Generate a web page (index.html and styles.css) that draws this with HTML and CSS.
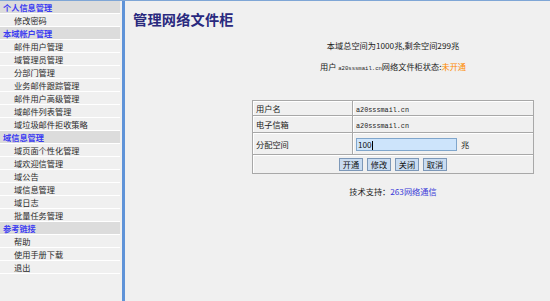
FILE: index.html
```html
<!DOCTYPE html>
<html lang="zh-CN">
<head>
<meta charset="utf-8">
<title>管理网络文件柜</title>
<link rel="stylesheet" href="styles.css">
</head>
<body>
<div class="page">
  <nav class="sidebar">
    <div class="grp">个人信息管理</div>
    <div class="item">修改密码</div>
    <div class="grp">本域帐户管理</div>
    <div class="item">邮件用户管理</div>
    <div class="item">域管理员管理</div>
    <div class="item">分部门管理</div>
    <div class="item">业务邮件跟踪管理</div>
    <div class="item">邮件用户高级管理</div>
    <div class="item">域邮件列表管理</div>
    <div class="item">域垃圾邮件拒收策略</div>
    <div class="grp">域信息管理</div>
    <div class="item">域页面个性化管理</div>
    <div class="item">域欢迎信管理</div>
    <div class="item">域公告</div>
    <div class="item">域信息管理</div>
    <div class="item">域日志</div>
    <div class="item">批量任务管理</div>
    <div class="grp">参考链接</div>
    <div class="item">帮助</div>
    <div class="item">使用手册下载</div>
    <div class="item">退出</div>
  </nav>
  <div class="divider"></div>
  <main class="main">
    <h1 class="title">管理网络文件柜</h1>
    <div class="content">
      <p class="info first">本域总空间为1000兆,剩余空间299兆</p>
      <p class="info second">用户 <span class="mono small">a20sssmail.cn</span>网络文件柜状态:<span class="off">未开通</span></p>
      <table class="form">
        <tr class="r1"><td class="lbl">用户名</td><td><span class="mono">a20sssmail.cn</span></td></tr>
        <tr class="r2"><td class="lbl">电子信箱</td><td><span class="mono">a20sssmail.cn</span></td></tr>
        <tr class="r3"><td class="lbl">分配空间</td><td><span class="field">100<span class="caret"></span></span><span class="unit">兆</span></td></tr>
        <tr class="r4"><td colspan="2" class="btns"><span class="btn">开通</span><span class="btn">修改</span><span class="btn">关闭</span><span class="btn">取消</span></td></tr>
      </table>
      <p class="support">技术支持：<span class="link">263网络通信</span></p>
    </div>
  </main>
</div>
</body>
</html>
```
FILE: styles.css
```css
html, body {
  margin: 0;
  padding: 0;
  background: #f0f0f0;
}
body {
  font-family: "Noto Sans CJK SC", "Liberation Sans", sans-serif;
  font-size: 8.2px;
  color: #222;
  border-top: 1px solid #7fa6d6;
  height: 300px;
  overflow: hidden;
}
.page {
  display: flex;
  height: 300px;
}
.sidebar {
  width: 120px;
  flex: none;
}
.grp, .item {
  height: 12px;
  line-height: 12px;
  border-bottom: 1px solid #ffffff;
  white-space: nowrap;
}
.grp {
  background: #dcdcdc;
  color: #3c3cf2;
  font-weight: bold;
  padding-left: 3px;
}
.item {
  padding-left: 14px;
  color: #2a2a2a;
}
.divider {
  width: 3px;
  margin-left: 2px;
  background: #5f93d8;
  flex: none;
}
.main {
  flex: 1;
  padding-left: 8px;
}
.title {
  margin: 9px 0 0 0;
  font-size: 14.2px;
  line-height: 18px;
  font-weight: bold;
  color: #29297e;
  letter-spacing: 0.2px;
}
.content {
  margin-left: 103px;
  width: 314px;
  text-align: center;
}
.info {
  margin: 0;
  line-height: 12px;
}
.first { margin-top: 11px; }
.second { margin-top: 9px; }
.mono {
  font-family: "Liberation Mono", monospace;
  font-size: 6.8px;
}
.small { font-size: 5.6px; }
.off { color: #ff8a00; }
.form {
  margin: 25px auto 0 auto;
  width: 282px;
  border-collapse: collapse;
  border: 1px solid #9a9a9a;
  text-align: left;
}
.form td {
  border: 1px solid #a8a8a8;
  box-shadow: inset 1px 1px 0 #ffffff;
  padding: 0 0 0 3px;
  vertical-align: middle;
}
.form .lbl { width: 96px; }
.r1 td { height: 14px; }
.r2 td { height: 16px; }
.r3 td { height: 21px; }
.r4 td { height: 18px; }
.field {
  display: inline-block;
  vertical-align: middle;
  width: 98px;
  height: 11px;
  line-height: 11px;
  background: #cde4fb;
  border: 1px solid #80a6cc;
  padding-left: 1px;
  font-size: 8.2px;
  color: #111;
}
.caret {
  display: inline-block;
  width: 1px;
  height: 9px;
  background: #000;
  vertical-align: middle;
}
.unit {
  display: inline-block;
  vertical-align: middle;
  margin-left: 4px;
}
.btns {
  text-align: center;
}
.form .btns { padding: 0; }
.btn {
  display: inline-block;
  vertical-align: middle;
  width: 22px;
  height: 11px;
  line-height: 11px;
  text-align: center;
  background: #c9dcf1;
  border: 1px solid #7d98b8;
  margin: 0 2px;
  color: #111;
}
.support {
  margin: 11px 0 0 0;
  line-height: 12px;
}
.link { color: #3a3ad8; }
```
